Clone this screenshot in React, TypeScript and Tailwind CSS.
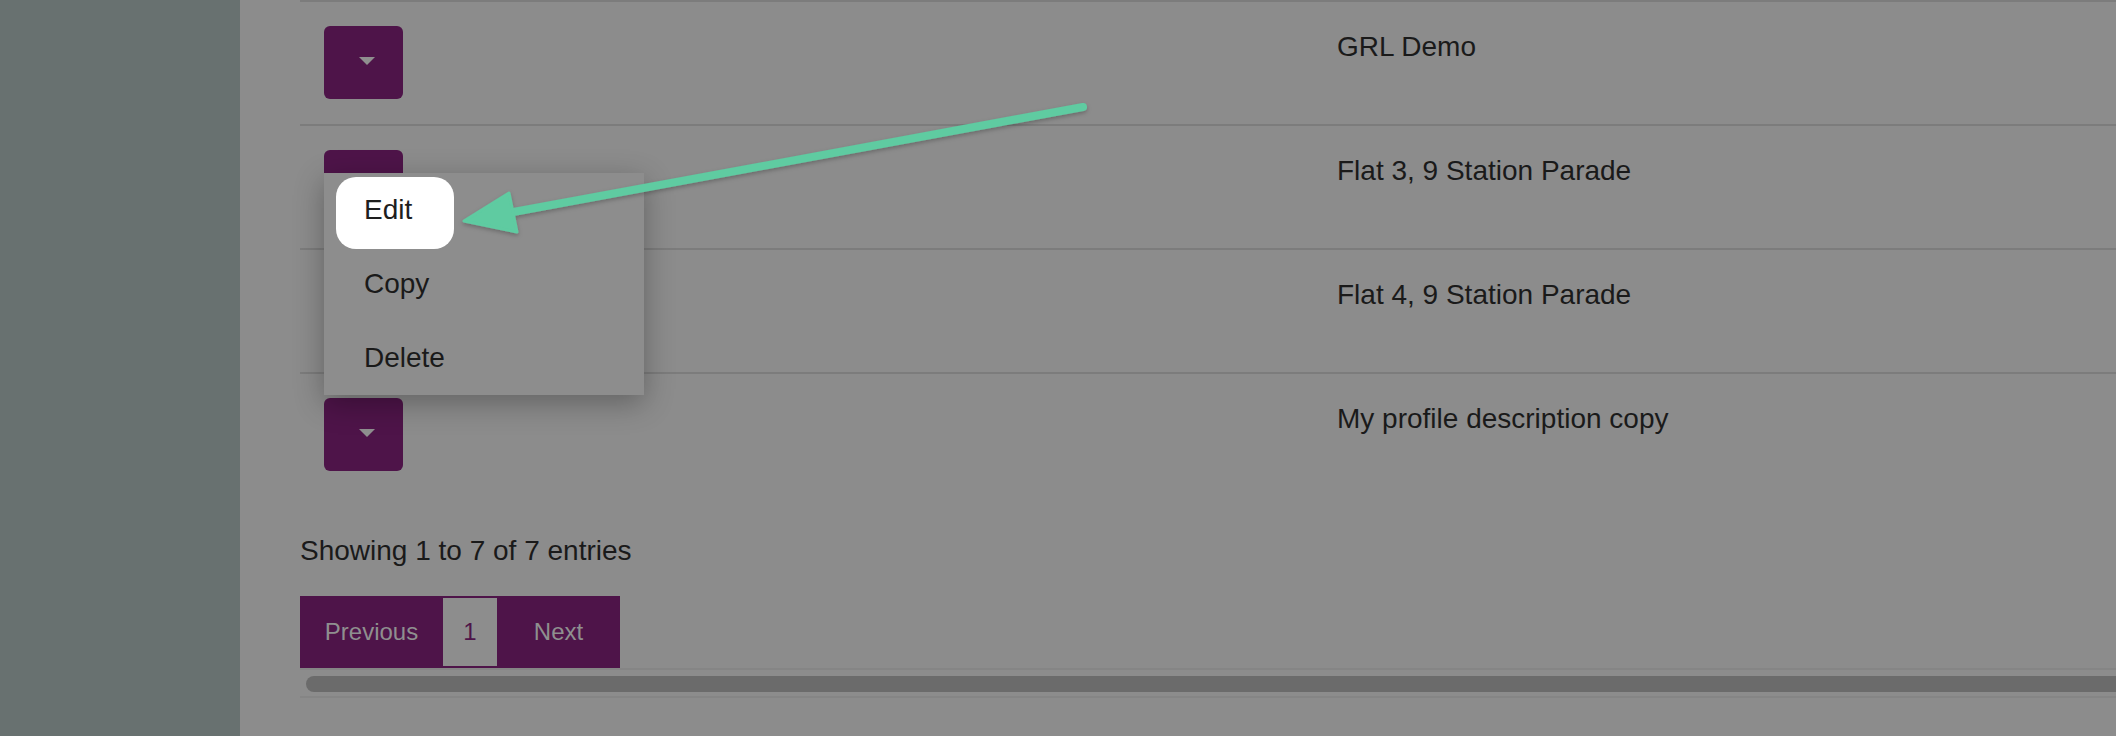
import React from "react";

const rows = [
  "GRL Demo",
  "Flat 3, 9 Station Parade",
  "Flat 4, 9 Station Parade",
  "My profile description copy",
];

function CaretButton() {
  return (
    <div className="flex h-[73px] w-[79px] items-start justify-center rounded-[6px] bg-[#4e1449] pl-[7px] pt-[31px]">
      <div className="h-0 w-0 border-x-[8px] border-t-[8px] border-x-transparent border-t-[#8f8f8f]" />
    </div>
  );
}

export default function App() {
  return (
    <div className="relative flex h-[736px] w-[2116px] overflow-hidden bg-[#8c8c8c] font-['Liberation_Sans',Arial,sans-serif] text-[#1a1a1a]">
      <aside className="h-full w-[240px] shrink-0 bg-[#687170]" />
      <main className="min-w-0 flex-1 pl-[60px]">
        <div className="w-[1900px]">
          {rows.map((r, i) => (
            <div key={r} className={`flex border-t-2 border-[#7c7c7c] ${i === 3 ? "h-[123px]" : "h-[124px]"}`}>
              <div className="w-[1013px] shrink-0 pl-[24px] pt-[24px]">
                <CaretButton />
              </div>
              <div className="pl-[24px] pt-[24px] text-[28px] leading-[42px]">{r}</div>
            </div>
          ))}
        </div>
        <div className="mt-[35px] text-[28px] leading-[42px]">Showing 1 to 7 of 7 entries</div>
        <div className="mt-[24px] flex h-[72px] w-[320px] items-stretch bg-[#4e1449] text-[24px] text-[#8f8f8f]">
          <div className="flex w-[143px] items-center justify-center">Previous</div>
          <div className="my-[2px] flex w-[54px] items-center justify-center bg-[#8d8d8d] text-[#4e1449]">1</div>
          <div className="flex w-[123px] items-center justify-center">Next</div>
        </div>
        <div className="h-[30px] w-[1900px] border-y-2 border-[#858585] pl-[6px] pt-[6px]">
          <div className="h-[16px] rounded-l-full bg-[#6b6b6b]" />
        </div>
      </main>

      {/* dropdown menu */}
      <div className="absolute left-[324px] top-[173px] w-[320px] bg-[#8d8d8d] text-[28px] shadow-[0_8px_28px_rgba(0,0,0,0.3)]">
        <div className="absolute left-[12px] top-[4px] h-[72px] w-[118px] rounded-[20px] bg-white" />
        <div className="relative h-[74px] pl-[40px] leading-[74px] text-[#1e1e1e]">Edit</div>
        <div className="h-[74px] pl-[40px] leading-[74px]">Copy</div>
        <div className="h-[74px] pl-[40px] leading-[74px]">Delete</div>
      </div>

      {/* annotation arrow */}
      <svg className="pointer-events-none absolute left-0 top-0" width="2116" height="736" viewBox="0 0 2116 736">
        <defs>
          <filter id="sh" x="-20%" y="-50%" width="140%" height="200%">
            <feDropShadow dx="0" dy="2" stdDeviation="2" floodColor="#000" floodOpacity="0.25" />
          </filter>
        </defs>
        <g filter="url(#sh)" fill="#5ecba1" stroke="#5ecba1">
          <line x1="1083" y1="107" x2="508" y2="213" strokeWidth="8" strokeLinecap="round" />
          <polygon points="464,221 509,193 517,232" strokeWidth="3" strokeLinejoin="round" />
        </g>
      </svg>
    </div>
  );
}
